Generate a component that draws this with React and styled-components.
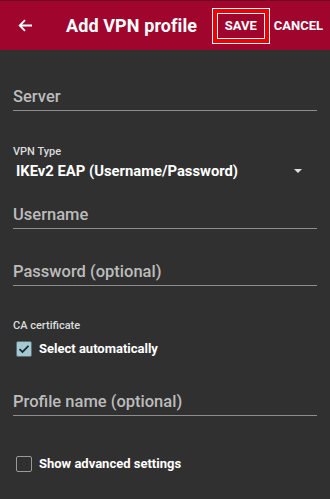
import React from "react";
import styled, { createGlobalStyle } from "styled-components";

const GlobalStyle = createGlobalStyle`
  html, body {
    margin: 0;
    padding: 0;
    background: #303030;
  }
  body {
    font-family: Roboto, "Liberation Sans", sans-serif;
    -webkit-font-smoothing: antialiased;
  }
`;

const Screen = styled.div`
  width: 330px;
  height: 499px;
  background: #303030;
  overflow: hidden;
`;

const Toolbar = styled.header`
  height: 50px;
  background: #a0052e;
  border-top: 1px solid #6d0820;
  box-sizing: border-box;
  display: flex;
  align-items: center;
  color: #fff;
`;

const BackButton = styled.button`
  width: 50px;
  height: 50px;
  padding: 0 0 0 18px;
  border: 0;
  background: none;
  display: flex;
  align-items: center;
  cursor: pointer;
`;

const Title = styled.h1`
  margin: 0 0 0 16px;
  font-size: 18px;
  font-weight: 700;
  letter-spacing: 0.1px;
  flex: 1;
  white-space: nowrap;
`;

const Actions = styled.div`
  display: flex;
  align-items: center;
  gap: 7px;
  margin-right: 7px;
`;

const ActionButton = styled.button`
  border: 0;
  background: none;
  color: #fff;
  font-family: inherit;
  font-size: 13px;
  font-weight: 700;
  padding: 0;
  height: 26px;
  cursor: pointer;
`;

const Highlight = styled.span`
  display: flex;
  align-items: center;
  justify-content: center;
  width: 46px;
  height: 24px;
  border: 1px solid #fff;
  box-shadow: 0 0 0 4px #f40000, 0 0 0 5px #fff;
  margin-right: 2px;
`;

const Form = styled.div`
  display: flex;
  flex-direction: column;
  padding: 0 13px;
`;

const Field = styled.div`
  margin-top: ${({ $top }) => $top}px;
  line-height: 20px;
  font-size: 16.5px;
  font-weight: 500;
  color: #bcbcbc;
  padding-bottom: 3px;
  border-bottom: 1px solid #8d8d8d;
`;

const Caption = styled.div`
  margin-top: ${({ $top }) => $top}px;
  font-size: 11px;
  line-height: 14px;
  font-weight: 500;
  color: #dcdcdc;
`;

const Select = styled.div`
  display: flex;
  align-items: center;
  justify-content: space-between;
  padding: 0 15px 0 3px;
  margin-top: 3px;
  font-size: 14.8px;
  line-height: 18px;
  font-weight: 700;
  color: #fff;
`;

const Caret = styled.span`
  width: 0;
  height: 0;
  border-left: 4px solid transparent;
  border-right: 4px solid transparent;
  border-top: 4px solid #e0e0e0;
`;

const CheckRow = styled.label`
  display: flex;
  align-items: center;
  gap: 7px;
  margin-top: ${({ $top }) => $top}px;
  padding-left: 3px;
  font-size: 13px;
  font-weight: 700;
  color: #fff;
  line-height: 16px;
`;

const Box = styled.span`
  width: 16px;
  height: 16px;
  box-sizing: border-box;
  border-radius: 2px;
  border: 1.5px solid ${({ $checked }) => ($checked ? "#5a6e73" : "#9a9a9a")};
  background: ${({ $checked }) => ($checked ? "#a3c9d2" : "transparent")};
  display: flex;
  align-items: center;
  justify-content: center;
`;

const Checkbox = ({ checked }) => (
  <Box $checked={checked}>
    {checked && (
      <svg width="12" height="10" viewBox="0 0 12 10">
        <path d="M1.5 5.2 L4.5 8 L10.5 1.8" fill="none" stroke="#1d2a2e" strokeWidth="1.8" />
      </svg>
    )}
  </Box>
);

export default function App() {
  return (
    <Screen>
      <GlobalStyle />
      <Toolbar>
        <BackButton aria-label="Back">
          <svg width="15" height="13" viewBox="0 0 15 13">
            <path d="M14 6.5 H2 M7 1.2 L1.7 6.5 L7 11.8" fill="none" stroke="#fff" strokeWidth="1.8" />
          </svg>
        </BackButton>
        <Title>Add VPN profile</Title>
        <Actions>
          <Highlight>
            <ActionButton>SAVE</ActionButton>
          </Highlight>
          <ActionButton>CANCEL</ActionButton>
        </Actions>
      </Toolbar>
      <Form>
        <Field $top={37}>Server</Field>
        <Caption $top={34}>VPN Type</Caption>
        <Select>
          IKEv2 EAP (Username/Password)
          <Caret />
        </Select>
        <Field $top={25}>Username</Field>
        <Field $top={33}>Password (optional)</Field>
        <Caption $top={33}>CA certificate</Caption>
        <CheckRow $top={8}>
          <Checkbox checked />
          Select automatically
        </CheckRow>
        <Field $top={35}>Profile name (optional)</Field>
        <CheckRow $top={40}>
          <Checkbox />
          Show advanced settings
        </CheckRow>
      </Form>
    </Screen>
  );
}
